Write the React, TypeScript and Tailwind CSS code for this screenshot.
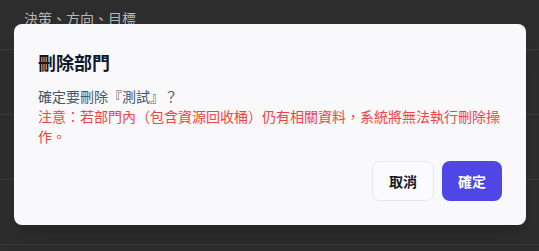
import React from 'react';

const font = { fontFamily: '"Noto Sans CJK TC", "Noto Sans", sans-serif' };

function Backdrop() {
  return (
    <div className="absolute inset-0 flex flex-col">
      <div className="h-[50px] border-b border-[#3a3a3a] pl-6 pt-[8px] text-sm leading-5 text-[#b8b8b8]">
        決策、方向、目標
      </div>
      <div className="h-[65px] border-b border-[#3a3a3a]" />
      <div className="h-[65px] border-b border-[#3a3a3a]" />
      <div className="h-[65px] border-b border-[#3a3a3a]" />
    </div>
  );
}

function ConfirmDialog() {
  return (
    <div className="absolute left-[14px] top-[24px] w-[512px] rounded-lg bg-[#f9f9fb] p-6 shadow-xl">
      <h2 className="text-lg font-bold leading-7 text-[#111827]">刪除部門</h2>
      <div className="mt-[10px] text-sm leading-5 [text-spacing-trim:space-all]">
        <p className="text-[#4b5563]">確定要刪除『測試』？</p>
        <p className="text-[#ef4444]">
          注意：若部門內（包含資源回收桶）仍有相關資料，系統將無法執行刪除操作。
        </p>
      </div>
      <div className="mt-[15px] flex justify-end gap-2">
        <button className="h-10 rounded-lg border border-[#e5e7eb] bg-[#fbfbfd] px-4 text-sm font-semibold text-[#111827]">
          取消
        </button>
        <button className="h-10 rounded-lg bg-[#4f46e5] px-4 text-sm font-semibold text-white">
          確定
        </button>
      </div>
    </div>
  );
}

export default function App() {
  return (
    <div className="relative h-[251px] w-[539px] overflow-hidden bg-[#2d2d2d]" style={font}>
      <Backdrop />
      <ConfirmDialog />
    </div>
  );
}
